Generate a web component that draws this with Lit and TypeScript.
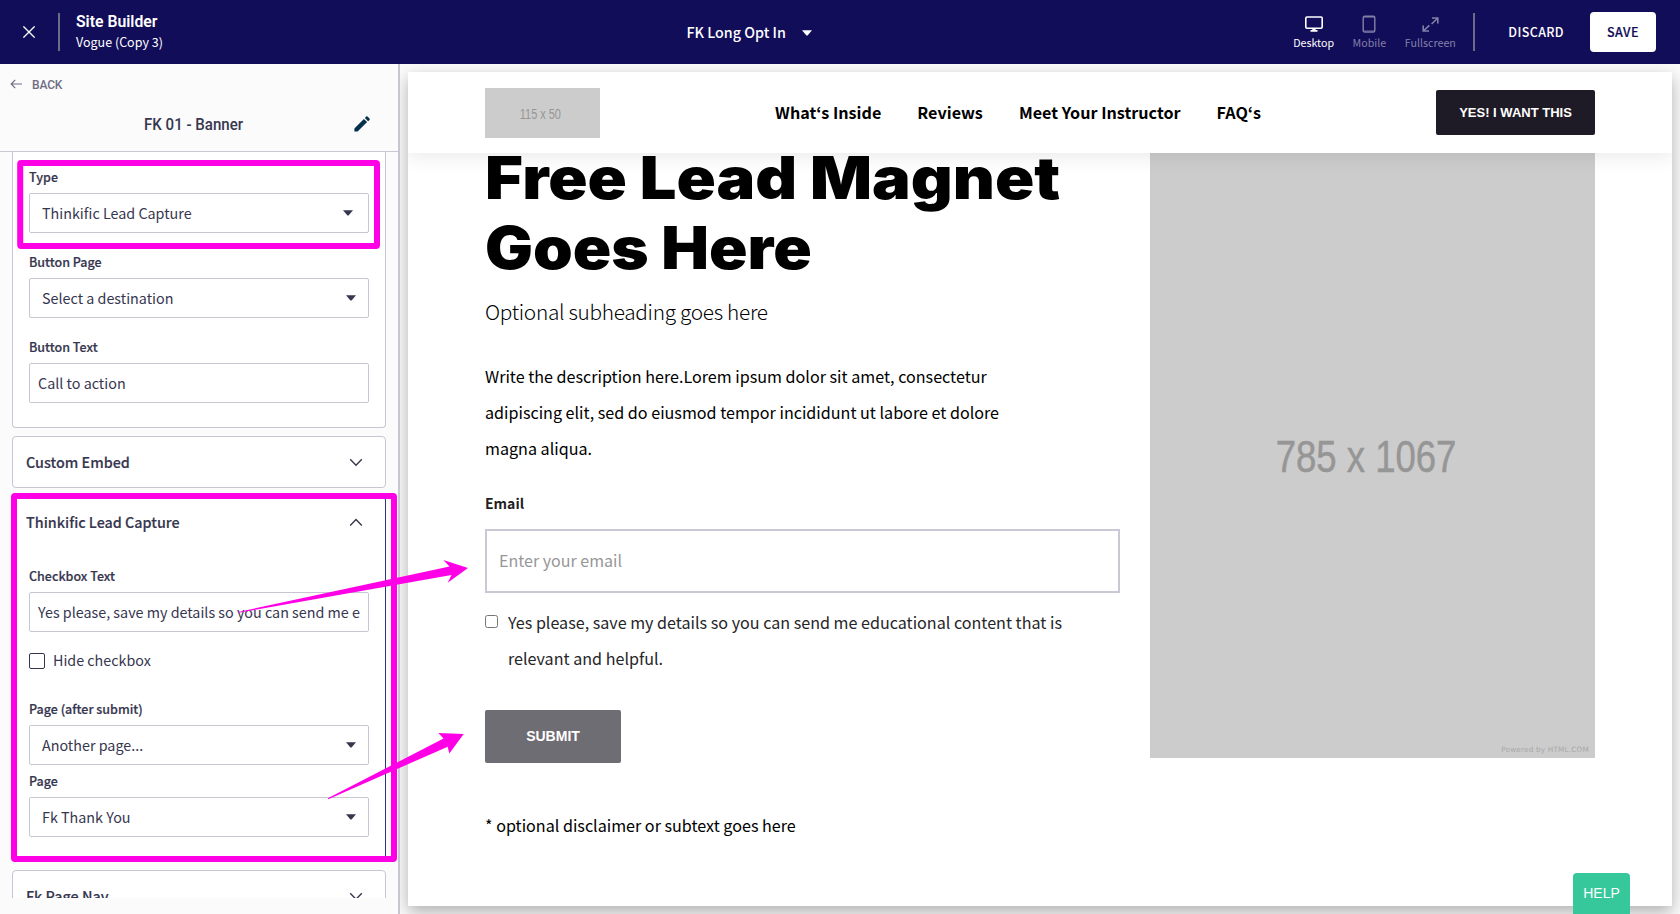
import { LitElement, html, svg, css, nothing } from "lit";
import { customElement, property } from "lit/decorators.js";

const chevronDown = html`<svg class="chev" width="14" height="9" viewBox="0 0 14 9"><path d="M1.2 1.3 7 7.2l5.8-5.9" fill="none" stroke="currentColor" stroke-width="1.4"/></svg>`;
const chevronUp = html`<svg class="chev" width="14" height="9" viewBox="0 0 14 9"><path d="M1.2 7.5 7 1.6l5.8 5.9" fill="none" stroke="currentColor" stroke-width="1.4"/></svg>`;
const caret = html`<svg width="10" height="6" viewBox="0 0 10 6"><path d="M0 .2h10L6 5a1.4 1.4 0 0 1-2 0Z" fill="currentColor"/></svg>`;

const sans = css`"Noto Sans CJK JP", "Noto Sans", sans-serif`;
const display = css`Roboto, "Noto Sans", sans-serif`;
const helvetica = css`"Liberation Sans", Arial, sans-serif`;

@customElement("builder-header")
export class BuilderHeader extends LitElement {
  static styles = css`
    :host { display: flex; height: 64px; box-sizing: border-box; padding-right: 24px; background: #120d59; color: #fff; font-family: ${sans}; align-items: flex-start; }
    .left { width: 686.5px; display: flex; flex: none; }
    .close { margin: 26px 23px 0; display: block; flex: none; }
    .rule { width: 2px; height: 38px; background: #6f6a87; margin-top: 13px; flex: none; }
    .names { padding: 11px 0 0 16px; white-space: nowrap; }
    .product { font: 600 17px/20px ${display}; transform: scaleX(.927); transform-origin: 0 50%; }
    .theme { font-size: 12.5px; line-height: 22px; }
    .page { display: flex; align-items: center; gap: 16.5px; height: 64px; font-weight: 500; font-size: 14.3px; line-height: 20px; white-space: nowrap; }
    .page svg { display: block; margin-top: 1px; }
    .right { margin-left: auto; display: flex; align-items: flex-start; }
    .views { display: flex; gap: 18.5px; padding-top: 15px; }
    .view { display: flex; flex-direction: column; align-items: center; font-size: 10.7px; line-height: 16px; color: #8380a8; }
    .view svg { height: 18px; display: block; margin-bottom: 1.5px; }
    .view.on { color: #fff; }
    .right .rule { margin-left: 17px; margin-right: 33.5px; }
    .discard { line-height: 64px; font-size: 12.5px; font-weight: 500; letter-spacing: .38px; margin-right: 26px; }
    .save { width: 66px; height: 40px; margin-top: 12px; border-radius: 4px; background: #fff; color: #120d59; font-size: 12.5px; line-height: 40px; font-weight: 500; letter-spacing: .45px; text-align: center; -webkit-text-stroke: .2px; }
  `;
  render() {
    return html`
      <div class="left">
        <svg class="close" width="12" height="12" viewBox="0 0 12 12"><path d="M.4.4l11.2 11.2M11.6.4.4 11.6" stroke="#fff" stroke-width="1.3"/></svg>
        <div class="rule"></div>
        <div class="names"><div class="product">Site Builder</div><div class="theme">Vogue (Copy 3)</div></div>
      </div>
      <div class="page"><span>FK Long Opt In</span>${caret}</div>
      <div class="right">
        <div class="views">
          <div class="view on"><svg width="18" viewBox="0 0 18 18"><rect x=".8" y="2" width="16.4" height="11.2" rx="1.2" fill="none" stroke="currentColor" stroke-width="1.6"/><path d="M7.3 13h3.4v2h1.8v1.7h-7V15h1.8z" fill="currentColor"/></svg>Desktop</div>
          <div class="view"><svg width="14" viewBox="0 0 14 18"><rect x="1.2" y="1.2" width="11.6" height="15.8" rx="1.6" fill="none" stroke="currentColor" stroke-width="1.4"/><path d="M1 2.4h12M1 15.8h12" stroke="currentColor" stroke-width=".6"/></svg>Mobile</div>
          <div class="view"><svg width="17" viewBox="0 0 17 18"><path d="M10 3h5.8v5.4M15.3 3.5 9.6 9M7 16H1.2v-5.4M1.7 15.5 7.4 10.3" fill="none" stroke="currentColor" stroke-width="1.6"/></svg>Fullscreen</div>
        </div>
        <div class="rule"></div>
        <div class="discard">DISCARD</div>
        <div class="save">SAVE</div>
      </div>`;
  }
}

@customElement("form-field")
export class FormField extends LitElement {
  @property() label = "";
  @property() value = "";
  @property() kind: "text" | "select" = "text";
  static styles = css`
    :host { display: block; font-family: ${sans}; color: #36364f; }
    .label { font-size: 12.5px; font-weight: 500; line-height: 20px; margin-bottom: 6px; -webkit-text-stroke: .2px; }
    .control { box-sizing: border-box; height: 40px; border: 1px solid #c7c7d4; border-radius: 2px; background: #fff; display: flex; align-items: center; justify-content: space-between; padding: 0 8px; font-size: 14.33px; line-height: 20px; white-space: nowrap; }
    .select { padding: 0 12.5px 0 12px; }
    :host([tight]) .select { padding-right: 15.5px; }
  `;
  render() {
    const select = this.kind === "select";
    return html`<div class="label">${this.label}</div>
      <div class="control ${select ? "select" : ""}"><span>${this.value}</span>${select ? caret : nothing}</div>`;
  }
}

@customElement("settings-panel")
export class SettingsPanel extends LitElement {
  static styles = css`
    :host { display: flex; flex-direction: column; box-sizing: border-box; width: 400px; height: 850px; border-right: 2px solid #c7c7d4; background: #fbfbfb; font-family: ${sans}; color: #36364f; flex: none; }
    .top { box-sizing: border-box; height: 88px; border-bottom: 1px solid #c7c7d4; flex: none; }
    .back { display: flex; align-items: center; gap: 10px; height: 16px; padding: 13px 0 0 10px; font: 500 12px/16px ${display}; color: #6e6d83; letter-spacing: -.15px; }
    .back svg { display: block; margin-top: -2px; }
    .heading { display: flex; align-items: center; padding: 20px 28.5px 0 0; height: 22px; }
    .name { flex: 1; text-align: center; font: 500 17px/20px ${display}; transform: scaleX(.885); transform-origin: 50% 50%; padding-left: 38px; }
    .scroll { height: 746px; overflow: hidden; padding: 0 12px; flex: none; }
    .card { box-sizing: border-box; width: 374px; border: 1px solid #c7c7d4; border-radius: 4px; background: #fff; margin-bottom: 8px; }
    .card.first { border-top: 0; border-radius: 0 0 4px 4px; height: 276px; padding-top: 15px; }
    .card.open { height: 366px; border-color: #2f3282; }
    .title { display: flex; justify-content: space-between; align-items: center; height: 50px; padding: 0 22px 0 13px; font-size: 14.35px; font-weight: 500; line-height: 20px; -webkit-text-stroke: .15px; }
    .body { padding: 0 16px 0 16px; display: flex; flex-direction: column; }
    .body.gap { gap: 19px; }
    .open .body { padding-top: 19px; }
    .hide { display: flex; align-items: center; gap: 8px; height: 16px; margin: 21px 0 30px; font-size: 14.3px; line-height: 20px; }
    .hide span:last-child { margin-top: -2px; }
    .box { width: 16px; height: 16px; box-sizing: border-box; border: 1.3px solid #36364f; border-radius: 2px; }
    .second { margin-top: 6px; }
  `;
  render() {
    return html`
      <div class="top">
        <div class="back"><svg width="12" height="10" viewBox="0 0 12 10"><path d="M5.2.8 1.2 5l4 4.2M1.2 5H12" fill="none" stroke="currentColor" stroke-width="1.2"/></svg>BACK</div>
        <div class="heading"><span class="name">FK 01 - Banner</span>
          <svg width="16" height="16" viewBox="0 0 16 16"><path d="M.4 12.4 9.9 2.9l3.2 3.2-9.5 9.5H.4zM10.9 1.9l1.3-1.3a1 1 0 0 1 1.3 0l2 2a1 1 0 0 1 0 1.3l-1.4 1.3z" fill="#03304c"/></svg>
        </div>
      </div>
      <div class="scroll">
        <div class="card first"><div class="body gap">
          <form-field tight kind="select" label="Type" value="Thinkific Lead Capture"></form-field>
          <form-field kind="select" label="Button Page" value="Select a destination"></form-field>
          <form-field label="Button Text" value="Call to action"></form-field>
        </div></div>
        <div class="card"><div class="title">Custom Embed${chevronDown}</div></div>
        <div class="card open">
          <div class="title">Thinkific Lead Capture${chevronUp}</div>
          <div class="body">
            <form-field label="Checkbox Text" value="Yes please, save my details so you can send me e"></form-field>
            <div class="hide"><span class="box"></span><span>Hide checkbox</span></div>
            <form-field kind="select" label="Page (after submit)" value="Another page..."></form-field>
            <form-field class="second" kind="select" label="Page" value="Fk Thank You"></form-field>
          </div>
        </div>
        <div class="card"><div class="title">Fk Page Nav${chevronDown}</div></div>
      </div>`;
  }
}

@customElement("site-preview")
export class SitePreview extends LitElement {
  static styles = css`
    :host { display: block; flex: 1; box-sizing: border-box; height: 850px; padding: 8px; background: #fbfbfb; overflow: hidden; font-family: ${sans}; color: #000; }
    .sheet { height: 834px; background: #fff; box-shadow: 0 6px 16px rgba(0,0,0,.3); overflow: hidden; }
    .nav { position: relative; z-index: 1; box-sizing: border-box; height: 81px; padding: 0 77px; background: #fff; display: flex; justify-content: space-between; align-items: center; box-shadow: 0 2px 20px rgba(0,0,0,.1); }
    .logo { width: 115px; height: 50px; background: #ccc; color: #969696; font: 14px/52px ${helvetica}; text-align: center; margin-top: 1px; }
    .logo span { display: inline-block; transform: scaleX(.78); margin: 0 -20px 0 -24px; }
    .links { display: flex; gap: 36px; font-size: 16.15px; font-weight: 700; line-height: 24px; margin-top: -2px; }
    .cta { width: 159px; height: 45px; background: #1f1b26; border-radius: 2px; color: #fff; font: 700 13px/45px ${helvetica}; text-align: center; }
    .hero { display: grid; grid-template-columns: 635px 445px; column-gap: 30px; padding: 0 77px; }
    .copy { margin-top: -10px; }
    h1 { margin: 0; font: 900 58.5px/70px Inter, sans-serif; white-space: nowrap; }
    .line { display: block; transform: scaleX(1.109); transform-origin: 0 50%; }
    .line.last { transform: scaleX(1.087); }
    .sub { margin: 10px 0 29px; font-size: 20.8px; font-weight: 300; line-height: 36px; letter-spacing: -.3px; }
    .desc { margin: 0; width: 540px; font-size: 16.12px; line-height: 36px; }
    .label { margin-top: 27px; font-size: 14px; font-weight: 700; line-height: 20px; color: #1f1f24; }
    .input { box-sizing: border-box; height: 64px; margin-top: 16px; border: 2px solid #c9c9d6; padding-left: 12px; font-size: 16.05px; line-height: 58px; color: #979797; }
    .agree { display: flex; margin-top: 11px; gap: 10px; font-size: 16.12px; line-height: 36px; color: #262629; }
    .tick { flex: none; box-sizing: border-box; width: 13px; height: 13px; margin-top: 11px; border: 1px solid #767676; border-radius: 2.5px; }
    .agree p { margin: 0; width: 590px; }
    .submit { width: 136px; height: 53px; margin-top: 34px; border-radius: 2px; background: #6f6d74; color: #fff; font: 700 14px/53px ${helvetica}; text-align: center; }
    .note { margin-top: 44px; font-size: 16.12px; line-height: 36px; }
    .image { height: 605px; background: #ccc; color: #969696; display: flex; flex-direction: column; font-family: ${helvetica}; }
    .size { flex: 1; padding-top: 277px; text-align: center; font-size: 44px; line-height: 54px; transform: scaleX(.83); transform-origin: 48.8% 50%; margin-left: -11px; -webkit-text-stroke: .5px; }
    .by { text-align: right; padding: 0 6px 1px 0; font: 7.3px/14px "DejaVu Sans", sans-serif; color: #a8a8a8; letter-spacing: .18px; }
  `;
  render() {
    return html`<div class="sheet">
      <div class="nav">
        <div class="logo"><span>115 x 50</span></div>
        <div class="links"><span>What‘s Inside</span><span>Reviews</span><span>Meet Your Instructor</span><span>FAQ‘s</span></div>
        <div class="cta">YES! I WANT THIS</div>
      </div>
      <div class="hero">
        <div class="copy">
          <h1><span class="line">Free Lead Magnet</span><span class="line last">Goes Here</span></h1>
          <div class="sub">Optional subheading goes here</div>
          <p class="desc">Write the description here.Lorem ipsum dolor sit amet, consectetur adipiscing elit, sed do eiusmod tempor incididunt ut labore et dolore magna aliqua.</p>
          <div class="label">Email</div>
          <div class="input">Enter your email</div>
          <div class="agree"><span class="tick"></span><p>Yes please, save my details so you can send me educational content that is relevant and helpful.</p></div>
          <div class="submit">SUBMIT</div>
          <div class="note">* optional disclaimer or subtext goes here</div>
        </div>
        <div class="image"><div class="size">785 x 1067</div><div class="by">Powered by HTML.COM</div></div>
      </div>
    </div>`;
  }
}

@customElement("app-root")
export class AppRoot extends LitElement {
  static styles = css`
    :host { display: block; position: relative; width: 1680px; height: 914px; overflow: hidden; }
    .main { display: flex; }
    .marks { position: absolute; inset: 0; pointer-events: none; }
    .help { position: absolute; right: 50px; bottom: 0; width: 57px; height: 41px; border-radius: 4px 4px 0 0; background: #36c79b; color: #fff; font: 14px/41px ${helvetica}; text-align: center; z-index: 2; }
  `;
  private frames = [
    { x: 20.2, y: 163, w: 356.8, h: 83 },
    { x: 14, y: 496, w: 380, h: 363 },
  ];
  private arrows = [
    "238,612 449.5,566.5 443.3,560 468,568 447.7,582.7 451.5,575 238.3,612.8",
    "327.8,798.3 443.5,738.5 438.3,733 463.7,734 449.3,753.5 447.7,746.7 328.3,799.3",
  ];
  render() {
    return html`
      <builder-header></builder-header>
      <div class="main"><settings-panel></settings-panel><site-preview></site-preview></div>
      <svg class="marks" width="1680" height="914" viewBox="0 0 1680 914">
        ${this.frames.map((f) => svg`<rect x=${f.x} y=${f.y} width=${f.w} height=${f.h} rx="1" fill="none" stroke="#ff00e6" stroke-width="6" stroke-linejoin="round"/>`)}
        ${this.arrows.map((p) => svg`<polygon points=${p} fill="#ff00e6"/>`)}
      </svg>
      <div class="help">HELP</div>`;
  }
}
